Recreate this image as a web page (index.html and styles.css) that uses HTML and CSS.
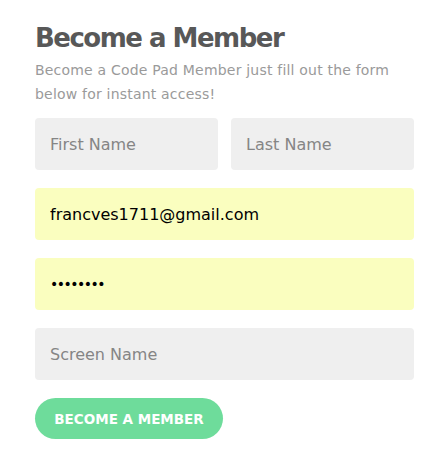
FILE: index.html
```html
<!DOCTYPE html>
<html>
<head>
<meta charset="utf-8">
<link rel="stylesheet" href="styles.css">
</head>
<body>
<main class="signup">
  <h1 class="title">Become a Member</h1>
  <p class="lead">Become a Code Pad Member just fill out the form below for instant access!</p>
  <form class="form">
    <div class="row">
      <input class="field" type="text" placeholder="First Name">
      <input class="field" type="text" placeholder="Last Name">
    </div>
    <input class="field filled" type="email" value="francves1711@gmail.com">
    <input class="field filled secret" type="password" value="12345678">
    <input class="field" type="text" placeholder="Screen Name">
    <div><button class="btn" type="button">BECOME A MEMBER</button></div>
  </form>
</main>
</body>
</html>
```
FILE: styles.css
```css
* { box-sizing: border-box; }
body {
  margin: 0;
  background: #fff;
  font-family: "DejaVu Sans", "Noto Sans", sans-serif;
}
.signup {
  width: 379px;
  margin: 0 0 0 35px;
  padding-top: 22px;
}
.title {
  margin: 0;
  font-size: 26px;
  line-height: 32px;
  font-weight: bold;
  letter-spacing: -1.5px;
  color: #585858;
}
.lead {
  margin: 4px 0 0;
  font-size: 14px;
  line-height: 24px;
  letter-spacing: 0.2px;
  color: #9a9a9a;
}
.form {
  margin-top: 12px;
  display: flex;
  flex-direction: column;
  gap: 18px;
}
.row {
  display: grid;
  grid-template-columns: 1fr 1fr;
  gap: 13px;
}
.field {
  display: block;
  width: 100%;
  height: 52px;
  border: 0;
  border-radius: 4px;
  background: #efefef;
  padding: 0 15px;
  font-family: inherit;
  font-size: 16px;
  color: #000;
  outline: none;
}
.field::placeholder { color: #858585; }
.filled { background: #fafebf; }
.secret { font-size: 14px; letter-spacing: -1.5px; }
.btn {
  height: 41px;
  width: 188px;
  border: 0;
  border-radius: 21px;
  background: #6edc9b;
  color: #fff;
  font-family: inherit;
  font-weight: bold;
  font-size: 13.5px;
  padding: 0;
}
```
